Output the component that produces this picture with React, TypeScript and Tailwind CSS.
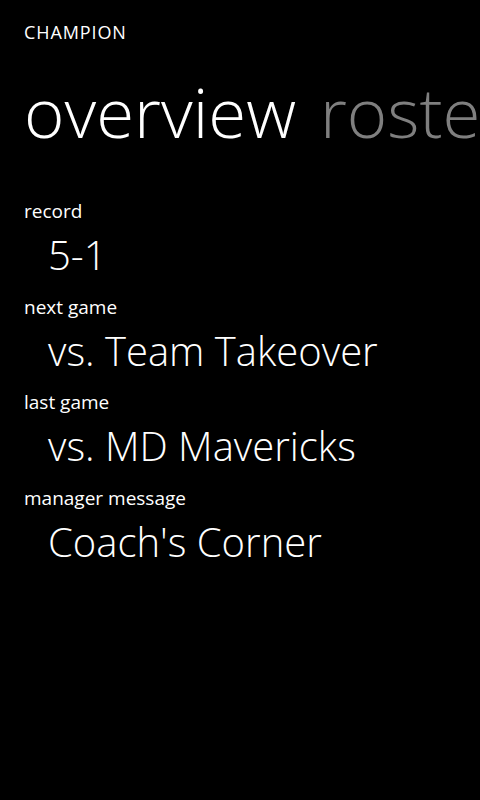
const items = [
  { label: "record", value: "5-1" },
  { label: "next game", value: "vs. Team Takeover" },
  { label: "last game", value: "vs. MD Mavericks" },
  { label: "manager message", value: "Coach's Corner" },
];

export default function App() {
  return (
    <div
      className="w-[480px] h-[800px] bg-black text-white overflow-hidden"
      style={{ fontFamily: '"Open Sans", "Noto Sans", sans-serif' }}
    >
      <div className="pt-5 px-6 text-[18px] leading-[24px] tracking-[0.9px]">
        CHAMPION
      </div>

      <div className="mt-[31px] pl-6 flex gap-[24px] whitespace-nowrap text-[69px] leading-[72px] font-light">
        <span>overview</span>
        <span className="text-[#7f7f7f]">roster</span>
      </div>

      <div className="mt-[52px] px-6 flex flex-col">
        {items.map((item) => (
          <div key={item.label} className="flex flex-col mb-[15.5px]">
            <span className="text-[19px] leading-[24px]">{item.label}</span>
            <span className="mt-2 pl-6 text-[40px] leading-[48px] font-light">
              {item.value}
            </span>
          </div>
        ))}
      </div>
    </div>
  );
}
